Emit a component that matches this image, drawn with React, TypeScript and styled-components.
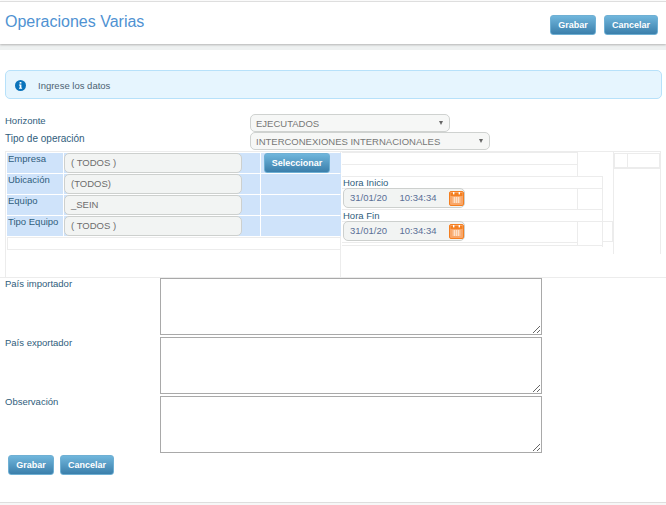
import React from "react";
import styled, { createGlobalStyle } from "styled-components";

const Global = createGlobalStyle`
  html, body { margin: 0; padding: 0; background: #fff; }
  body { font-family: "Liberation Sans", Arial, sans-serif; font-size: 10px; color: #2f5d7c; }
`;

const line = "#ececec";

const Page = styled.div`
  width: 666px;
  height: 505px;
  overflow: hidden;
  padding-top: 1px;
  box-sizing: border-box;
`;
const Header = styled.header`
  height: 42px;
  border-top: 1px solid #dedede;
  box-shadow: 0 1px 2px #b5b5b5;
  display: flex;
  justify-content: space-between;
  padding: 0 8px 0 5px;
  position: relative;
  background: #fff;
`;
const Title = styled.h1`
  margin: 10px 0 0;
  font-size: 16px;
  line-height: 20px;
  font-weight: 400;
  color: #4f92d2;
`;
const Actions = styled.div<{ $inset?: boolean }>`
  display: flex;
  gap: ${(p) => (p.$inset ? 6 : 8)}px;
  margin: ${(p) => (p.$inset ? "1px 0 0 8px" : "13px 0 0")};
`;
const Button = styled.button<{ $w: number }>`
  width: ${(p) => p.$w}px;
  height: 20px;
  padding: 0;
  border: 1px solid #6fb0d4;
  border-radius: 3px;
  background: linear-gradient(#70b6dc, #3b7fab);
  color: #fff;
  font: bold 9px "Liberation Sans", Arial, sans-serif;
`;
const Band = styled.div`
  height: 6px;
  background: #eef1f1;
`;
const Alert = styled.div`
  margin: 20px 4px 0 5px;
  height: 29px;
  box-sizing: border-box;
  border: 1px solid #b7e1fa;
  border-radius: 5px;
  background: #e6f5fe;
  display: flex;
  align-items: center;
  gap: 12px;
  padding: 1px 0 0 9px;
  color: #4c6272;
  font-size: 9.5px;
`;
const FilterRows = styled.div`
  margin: 15px 0 0 5px;
  display: grid;
  grid-template-columns: 245px auto;
  grid-auto-rows: 18px;
  justify-content: start;
  align-items: start;
`;
const Label = styled.span<{ $wide?: boolean; $drop?: number }>`
  font-size: ${(p) => (p.$wide ? 10 : 9.5)}px;
  line-height: 12px;
  color: #2f5d7c;
  padding-top: ${(p) => p.$drop ?? 0}px;
`;
const Select = styled.div<{ $w: number }>`
  width: ${(p) => p.$w}px;
  height: 18px;
  box-sizing: border-box;
  border: 1px solid #cfd2d0;
  border-radius: 5px;
  background: #f6f7f6;
  color: #777;
  display: flex;
  justify-content: space-between;
  align-items: center;
  padding: 0 6px 0 5px;
  font-size: 9.5px;
`;
const Arrow = styled.span`
  width: 0;
  height: 0;
  border-left: 2.5px solid transparent;
  border-right: 2.5px solid transparent;
  border-top: 4px solid #666;
`;
const FilterArea = styled.section`
  margin: 1px 5px 0 5px;
  height: 126px;
  width: 656px;
  box-sizing: border-box;
  border-top: 1px solid ${line};
  border-left: 1px solid ${line};
  display: flex;
`;
const LeftCol = styled.div`
  width: 335px;
  flex: none;
  box-sizing: border-box;
  border-right: 1px solid ${line};
  padding: 1px 0 0 1px;
`;
const PickTable = styled.div`
  display: grid;
  grid-template-columns: 56px 196px 80px;
  grid-auto-rows: 20px;
  row-gap: 1px;
  column-gap: 1px;
  width: 334px;
`;
const LabelCell = styled.div`
  background: #cfe3fa;
  padding: 0 0 0 1px;
  font-size: 9.5px;
  line-height: 12px;
  color: #2f5d7c;
`;
const InputCell = styled.div`
  background: #cfe3fa;
  padding: 0 18px 0 0;
`;
const ActionCell = styled.div`
  background: #cfe3fa;
  padding: 0 0 0 3px;
`;
const Field = styled.div`
  height: 20px;
  box-sizing: border-box;
  border: 1px solid #cdd0ce;
  border-radius: 5px;
  background: #f2f4f3;
  color: #6d6d6d;
  font-size: 9.5px;
  line-height: 18px;
  padding-left: 6px;
`;
const EmptyRow = styled.div`
  height: 11px;
  margin-top: 1px;
  width: 332px;
  border: 1px solid ${line};
`;
const RightArea = styled.div`
  display: flex;
  height: 102px;
  flex: none;
`;
const TimeGrid = styled.div`
  width: 271px;
  margin-left: 1px;
  height: 95px;
  display: grid;
  grid-template-columns: 236px 25px 10px;
  grid-template-rows: 12px 12px 12px 21px 12px 21px 3px 2px;
`;
const GridCell = styled.div`
  box-sizing: border-box;
  border-top: 1px solid ${line};
  border-right: 1px solid ${line};
  min-width: 0;
`;
const SideCell = styled(GridCell)<{ $span: string }>`
  grid-column: 2;
  grid-row: ${(p) => p.$span};
`;
const EdgeCell = styled.div`
  grid-column: 3;
  grid-row: 6;
  border-top: 1px solid ${line};
  border-bottom: 1px solid ${line};
  border-right: 1px solid ${line};
  box-sizing: border-box;
  margin-left: -1px;
`;
const MainCell = styled(GridCell)`
  grid-column: 1;
  color: #2f5d7c;
  font-size: 9.5px;
  line-height: 12px;
  padding-left: 1px;
`;
const WideCell = styled(MainCell)`
  grid-column: 1 / 3;
`;
const Picker = styled.div`
  width: 122px;
  height: 20px;
  box-sizing: border-box;
  margin-top: -1px;
  border: 1px solid #cdd0ce;
  border-radius: 5px;
  background: #f2f4f3;
  color: #5a6f96;
  display: flex;
  align-items: center;
  padding-left: 6px;
  font-size: 9.5px;
  position: relative;
  z-index: 1;
`;
const DateText = styled.span`
  width: 50px;
`;
const TimeText = styled.span`
  width: 50px;
`;
const SidePanel = styled.div`
  width: 48px;
  height: 102px;
  box-sizing: border-box;
  border-left: 1px solid ${line};
  border-right: 1px solid ${line};
  padding-top: 1px;
`;
const MiniTable = styled.div`
  display: grid;
  grid-template-columns: 13px 1fr;
  height: 13px;
  border: 1px solid ${line};
  border-bottom-width: 2px;
`;
const MiniCell = styled.div`
  border-right: 1px solid ${line};
  &:last-child { border-right: 0; }
`;
const FormArea = styled.section`
  border-top: 1px solid ${line};
  padding: 0 0 0 5px;
  display: grid;
  grid-template-columns: 155px 382px;
  row-gap: 2px;
`;
const Area = styled.textarea`
  display: block;
  box-sizing: border-box;
  width: 382px;
  height: 57px;
  border: 1px solid #a9a9a9;
  border-radius: 0;
  margin: 0;
  padding: 2px;
  background: #fff;
`;
const FormButtons = styled.div`
  margin-top: 2px;
`;
const Footer = styled.footer`
  margin-top: 27px;
  height: 3px;
  border-top: 1px solid #dedede;
  background: #f7f7f7;
`;
const CalWrap = styled.span`
  width: 13px;
  height: 13px;
  display: flex;
  background: #f9a668;
  border: 1px solid #f47f20;
  border-radius: 2px;
`;

const InfoIcon = () => (
  <svg width="11" height="11" viewBox="0 0 11 11" aria-hidden="true">
    <circle cx="5.5" cy="5.5" r="5.5" fill="#0b73bb" />
    <rect x="4.6" y="2" width="1.8" height="1.6" fill="#fff" />
    <path d="M4 4.5h2.4v3.2h.7v1H4v-1h.7V5.5H4z" fill="#fff" />
  </svg>
);

const CalendarIcon = () => (
  <CalWrap>
    <svg width="13" height="13" viewBox="0 0 13 13" aria-hidden="true">
      <rect x="0.5" y="1" width="12" height="3" fill="#f47f20" />
      <rect x="3" y="0" width="1.4" height="2.4" fill="#fff" />
      <rect x="8.6" y="0" width="1.4" height="2.4" fill="#fff" />
      <path d="M2.5 6h8M2.5 8h8M2.5 10h8M4.5 5v6M6.5 5v6M8.5 5v6" stroke="#fde3cd" strokeWidth="0.9" />
    </svg>
  </CalWrap>
);

const rows = [
  ["Empresa", "( TODOS )"],
  ["Ubicación", "(TODOS)"],
  ["Equipo", "_SEIN"],
  ["Tipo Equipo", "( TODOS )"],
];

export default function App() {
  return (
    <Page>
      <Global />
      <Header>
        <Title>Operaciones Varias</Title>
        <Actions>
          <Button $w={46}>Grabar</Button>
          <Button $w={54}>Cancelar</Button>
        </Actions>
      </Header>
      <Band />
      <Alert>
        <InfoIcon />
        Ingrese los datos
      </Alert>
      <FilterRows>
        <Label $drop={1}>Horizonte</Label>
        <Select $w={200}>
          EJECUTADOS
          <Arrow />
        </Select>
        <Label $wide $drop={1}>Tipo de operación</Label>
        <Select $w={240}>
          INTERCONEXIONES INTERNACIONALES
          <Arrow />
        </Select>
      </FilterRows>
      <FilterArea>
        <LeftCol>
          <PickTable>
            {rows.map(([label, value], i) => (
              <React.Fragment key={label}>
                <LabelCell>{label}</LabelCell>
                <InputCell>
                  <Field>{value}</Field>
                </InputCell>
                <ActionCell>{i === 0 && <Button $w={66}>Seleccionar</Button>}</ActionCell>
              </React.Fragment>
            ))}
          </PickTable>
          <EmptyRow />
        </LeftCol>
        <RightArea>
          <TimeGrid>
            <MainCell />
            <MainCell />
            <WideCell>Hora Inicio</WideCell>
            <MainCell>
              <Picker>
                <DateText>31/01/20</DateText>
                <TimeText>10:34:34</TimeText>
                <CalendarIcon />
              </Picker>
            </MainCell>
            <WideCell>Hora Fin</WideCell>
            <MainCell>
              <Picker>
                <DateText>31/01/20</DateText>
                <TimeText>10:34:34</TimeText>
                <CalendarIcon />
              </Picker>
            </MainCell>
            <MainCell />
            <WideCell />
            <SideCell $span="4" />
            <SideCell $span="6 / 8" />
            <EdgeCell />
          </TimeGrid>
          <SidePanel>
            <MiniTable>
              <MiniCell />
              <MiniCell />
            </MiniTable>
          </SidePanel>
        </RightArea>
      </FilterArea>
      <FormArea>
        <Label>País importador</Label>
        <Area />
        <Label>País exportador</Label>
        <Area />
        <Label>Observación</Label>
        <Area />
      </FormArea>
      <FormButtons>
        <Actions $inset>
          <Button $w={46}>Grabar</Button>
          <Button $w={54}>Cancelar</Button>
        </Actions>
      </FormButtons>
      <Footer />
    </Page>
  );
}
